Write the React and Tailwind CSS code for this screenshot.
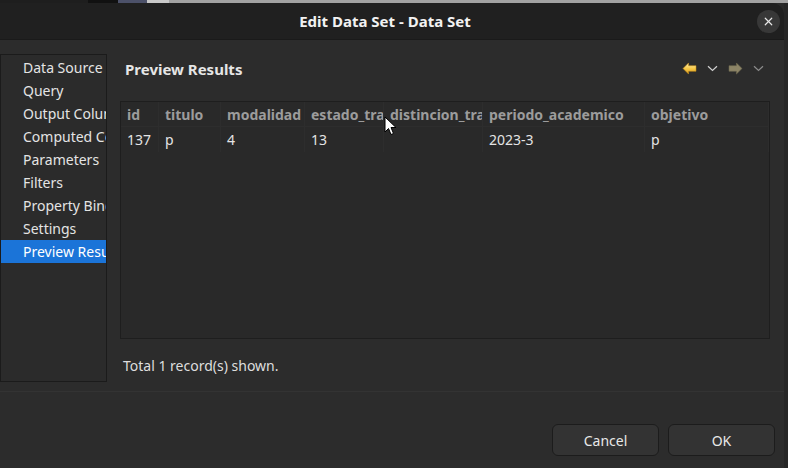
import { X } from 'lucide-react';

const navItems = [
  'Data Source',
  'Query',
  'Output Columns',
  'Computed Columns',
  'Parameters',
  'Filters',
  'Property Binding',
  'Settings',
  'Preview Results',
];

const columns = [
  { name: 'id', value: '137' },
  { name: 'titulo', value: 'p' },
  { name: 'modalidad', value: '4' },
  { name: 'estado_trabajo', value: '13' },
  { name: 'distincion_trabajo', value: '' },
  { name: 'periodo_academico', value: '2023-3' },
  { name: 'objetivo', value: 'p' },
];

const BackArrow = () => (
  <svg width="15" height="13" viewBox="0 0 16 14">
    <defs>
      <linearGradient id="gold" x1="0" y1="0" x2="0" y2="1">
        <stop offset="0" stopColor="#fff2b8" />
        <stop offset="0.5" stopColor="#f7c948" />
        <stop offset="1" stopColor="#d99a1e" />
      </linearGradient>
    </defs>
    <path d="M1 7 L7 1 L7 4 L15 4 L15 10 L7 10 L7 13 Z" fill="url(#gold)" stroke="#c58d18" strokeWidth="0.6" strokeLinejoin="round" />
  </svg>
);

const ForwardArrow = () => (
  <svg width="15" height="13" viewBox="0 0 16 14">
    <path d="M15 7 L9 1 L9 4 L1 4 L1 10 L9 10 L9 13 Z" fill="#8c8466" stroke="#6f684f" strokeWidth="0.6" strokeLinejoin="round" />
  </svg>
);

const Chevron = ({ color }) => (
  <svg width="11" height="7" viewBox="0 0 11 7">
    <path d="M1 1.2 L5.5 5.5 L10 1.2" fill="none" stroke={color} strokeWidth="1.2" />
  </svg>
);

const Cursor = () => (
  <svg className="absolute left-[384px] top-[116px]" width="13" height="20" viewBox="0 0 13 20">
    <path d="M1 1 L1 16 L4.5 12.5 L7 18.5 L9.5 17.5 L7 11.5 L12 11.5 Z" fill="#ffffff" stroke="#000000" strokeWidth="1" strokeLinejoin="round" />
  </svg>
);

export default function App() {
  return (
    <div className="relative w-[788px] h-[468px] bg-[#2a2a2a] overflow-hidden font-['Noto_Sans',sans-serif] text-[14px]">
      <div className="flex h-[3px]">
        <div className="w-[88px] bg-[#1e1e1e]" />
        <div className="w-[30px] bg-[#111111]" />
        <div className="w-[29px] bg-[#4c5169]" />
        <div className="w-[22px] bg-[#c9c9c9]" />
        <div className="flex-1 bg-[#a2a2a2]" />
      </div>
      <div className="flex">
        <div className="w-[784px] h-[465px] flex flex-col bg-[#2c2c2c] rounded-tr-[12px] overflow-hidden">
          <div className="h-[37px] shrink-0 flex items-center justify-center relative bg-[#202020] border-b border-[#1a1a1a]">
            <span className="pr-[14px] text-[15px] font-bold text-[#f2f2f2]">Edit Data Set - Data Set</span>
            <div className="absolute right-[4px] top-[7px] w-[23px] h-[23px] rounded-full bg-[#383838] flex items-center justify-center">
              <X size={13} strokeWidth={2.2} color="#e8e8e8" />
            </div>
          </div>

          <div className="h-[352px] shrink-0 flex pt-[14px] border-b border-[#333333]">
            <div className="w-[107px] h-[328px] border border-[#1b1b1b] bg-[#2b2b2b] pt-[1px] overflow-hidden">
              {navItems.map((item) => (
                <div
                  key={item}
                  className={`h-[23px] pl-[22px] leading-[23px] whitespace-nowrap overflow-hidden text-[#e4e4e4] ${item === 'Preview Results' ? 'bg-[#1b74d8] text-white' : ''}`}
                >
                  {item}
                </div>
              ))}
            </div>

            <div className="flex-1 flex flex-col pl-[13px] pr-[14px]">
              <div className="h-[47px] flex items-start justify-between pt-[4px]">
                <span className="pl-[5px] leading-[22px] text-[15px] font-bold text-[#e6e6e6]">Preview Results</span>
                <div className="flex items-center gap-[10px] pt-[4px] pr-[6px]">
                  <BackArrow />
                  <Chevron color="#cfcfcf" />
                  <ForwardArrow />
                  <Chevron color="#8a8a8a" />
                </div>
              </div>

              <div className="h-[238px] border border-[#1e1e1e] bg-[#292929] overflow-hidden">
                <div className="grid grid-cols-[38px_62px_84px_79px_99px_162px_1fr] h-[25px] border-b border-[#2d2d2d]">
                  {columns.map((c) => (
                    <div key={c.name} className="pl-[6px] leading-[25px] font-bold text-[#9c9c9c] whitespace-nowrap overflow-hidden border-r border-[#2d2d2d]">
                      {c.name}
                    </div>
                  ))}
                </div>
                <div className="grid grid-cols-[38px_62px_84px_79px_99px_162px_1fr] h-[25px]">
                  {columns.map((c) => (
                    <div key={c.name} className="pl-[6px] leading-[25px] text-[#e4e4e4] whitespace-nowrap overflow-hidden border-r border-[#2d2d2d]">
                      {c.value}
                    </div>
                  ))}
                </div>
              </div>

              <div className="pt-[16px] pl-[3px] leading-[22px] text-[#dedede]">Total 1 record(s) shown.</div>
            </div>
          </div>

          <div className="flex-1 flex items-end justify-end gap-[9px] pr-[9px] pb-[12px]">
            <button className="w-[107px] h-[32px] rounded-[6px] bg-[#333333] border border-[#1c1c1c] text-[#e8e8e8]">Cancel</button>
            <button className="w-[107px] h-[32px] rounded-[6px] bg-[#333333] border border-[#1c1c1c] text-[#e8e8e8]">OK</button>
          </div>
        </div>
        <div className="flex-1 bg-[#262626]" />
      </div>
      <Cursor />
    </div>
  );
}
